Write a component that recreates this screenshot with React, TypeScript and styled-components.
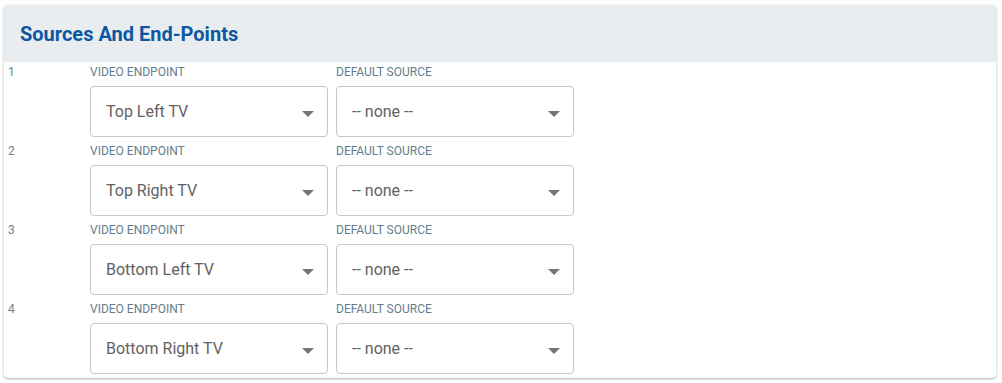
import React from 'react';
import styled, { createGlobalStyle } from 'styled-components';

const GlobalStyle = createGlobalStyle`
	body {
		margin: 0;
		padding: 5px 6px 5px 4px;
		background: #fff;
		font-family: Roboto, "Liberation Sans", sans-serif;
	}
`;

const Card = styled.section`
	background: #fff;
	border-radius: 4px;
	box-shadow: 0 1px 3px rgba(0, 0, 0, 0.25), 0 1px 1px rgba(0, 0, 0, 0.08);
	overflow: hidden;
	padding-bottom: 4px;
`;

const Header = styled.header`
	height: 57px;
	display: flex;
	align-items: center;
	padding: 0 16px;
	background: #e9edf0;
`;

const Title = styled.h2`
	margin: 0;
	font-size: 20px;
	font-weight: 700;
	color: #0c58a2;
`;

const List = styled.div`
	display: flex;
	flex-direction: column;
	gap: 6px;
	padding-top: 2px;
`;

const Row = styled.div`
	display: grid;
	grid-template-columns: 78px 238px 238px;
	column-gap: 8px;
`;

const Index = styled.div`
	font-size: 12px;
	line-height: 16px;
	color: #6f8590;
	padding-left: 4px;
`;

const Field = styled.label`
	display: flex;
	flex-direction: column;
	gap: 6px;
`;

const Caption = styled.span`
	font-size: 12px;
	line-height: 16px;
	color: #637d8c;
	text-transform: uppercase;
`;

const Select = styled.div`
	height: 51px;
	box-sizing: border-box;
	border: 1px solid #c6c6c6;
	border-radius: 4px;
	display: flex;
	align-items: center;
	justify-content: space-between;
	padding: 0 13px 0 15px;
	font-size: 16px;
	color: #626262;
`;

const Arrow = styled.span`
	width: 0;
	height: 0;
	margin-top: 4px;
	border-left: 6px solid transparent;
	border-right: 6px solid transparent;
	border-top: 6px solid #757575;
`;

const endpoints = ['Top Left TV', 'Top Right TV', 'Bottom Left TV', 'Bottom Right TV'];

const App: React.FC = () => (
	<>
		<GlobalStyle />
		<Card>
			<Header>
				<Title>Sources And End-Points</Title>
			</Header>
			<List>
				{endpoints.map((name, i) => (
					<Row key={name}>
						<Index>{i + 1}</Index>
						<Field>
							<Caption>Video Endpoint</Caption>
							<Select>
								{name}
								<Arrow />
							</Select>
						</Field>
						<Field>
							<Caption>Default Source</Caption>
							<Select>
								-- none --
								<Arrow />
							</Select>
						</Field>
					</Row>
				))}
			</List>
		</Card>
	</>
);

export default App;
